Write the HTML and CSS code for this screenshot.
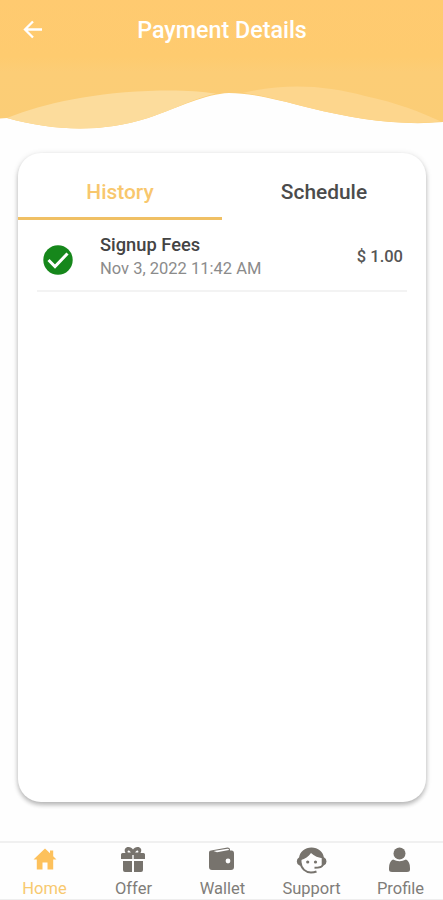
FILE: index.html
```
<!DOCTYPE html>
<html lang="en">
<head>
<meta charset="utf-8">
<title>Payment Details</title>
<link rel="stylesheet" href="styles.css">
</head>
<body>
<div class="app">
  <header class="header">
    <svg class="waves" viewBox="0 0 443 140" aria-hidden="true">
      <defs>
        <linearGradient id="sky" x1="0" y1="0" x2="0" y2="1">
          <stop offset="0" stop-color="#ffca70"/>
          <stop offset=".44" stop-color="#fecb6f"/>
          <stop offset=".56" stop-color="#fccd76"/>
          <stop offset="1" stop-color="#fbcd76"/>
        </linearGradient>
      </defs>
      <path fill="url(#sky)" d="M0 0H443V122C400 126 355 119 310 108C275 99 250 93 229 93C205 94 180 107 148 118C100 133 55 131 7 118L0 118.500Z"/>
      <path fill="#fcdc9c" d="M7 118C45 103 95 92 160 90.500C180 90 200 91 216 93.500C195 98 175 109 148 118C100 133 55 131 7 118Z"/>
      <path fill="#fdd68d" d="M242 93C285 83 325 85 365 96C398 103 420 112 441 121.500C400 126 355 119 310 108C282 101 258 94 242 93Z"/>
    </svg>
    <div class="bar">
      <svg class="back" viewBox="0 0 20 20"><path d="M19 9.500H2.500M10 1.500L2 9.500L10 17.500"/></svg>
      <h1 class="title">Payment Details</h1>
    </div>
  </header>
  <main class="card">
    <div class="tabs">
      <div class="tab active">History</div>
      <div class="tab">Schedule</div>
    </div>
    <div class="row">
      <svg class="check" viewBox="0 0 30 30"><circle cx="15" cy="15" r="14.700" fill="#16871b"/><path d="M5.500 15L12 21.500L24.500 8.500" fill="none" stroke="#fff" stroke-width="3"/></svg>
      <div class="info">
        <div class="name">Signup Fees</div>
        <div class="date">Nov 3, 2022 11:42 AM</div>
      </div>
      <div class="amount">$ 1.00</div>
    </div>
  </main>
  <nav class="nav">
    <div class="item current">
      <svg viewBox="0 0 32 30"><path d="M16 3.500L4.500 14.500H7.800V24.500H13.500V17.500H18.500V24.500H24.200V14.500H27.500L24.200 11.300V5.500H21V8.300Z"/></svg>
      <span class="label">Home</span>
    </div>
    <div class="item">
      <svg viewBox="0 0 32 30"><path d="M4.500 8H7.500C5.500 4.500 7.500 2 10.500 2C12.500 2 14 3 15 4.500C16 3 17.500 2 19.500 2C22.500 2 24.500 4.500 22.500 8H25.500Q27 8 27 9.500V14H3V9.500Q3 8 4.500 8ZM5 16H14V27H7Q5 27 5 25ZM16 16H25V25Q25 27 23 27H16Z"/><path class="cut" d="M9.800 7.500C9 5.500 11 4.500 12.800 7.500ZM17.200 7.500C19 4.500 21 5.500 20.200 7.500ZM14.300 10H15.700V14.500H14.300Z"/></svg>
      <span class="label">Offer</span>
    </div>
    <div class="item">
      <svg viewBox="0 0 32 30"><path d="M4 5.500L20.500 2.500Q23 2.500 23 4.500V5.500H24.500Q27 5.500 27 8.500V22Q27 25 24 25H5Q2 25 2 22V7.500Q2 5.500 4 5.500Z"/><path class="cut" d="M6.500 6L20.500 3.700Q22 3.700 22 5L10 7.200Z"/><circle class="cut" cx="21" cy="16" r="2.400"/></svg>
      <span class="label">Wallet</span>
    </div>
    <div class="item">
      <svg viewBox="0 0 32 30"><path d="M3 13.500C3.500 6.500 9 2.500 15.500 2.500C22 2.500 27.500 6.500 28 13.500C22.500 13 18 11 15 8C12.500 11.500 9 14 5 15Z"/><path class="line" d="M4.500 12.500V17C5 24 10 27.500 15 27.500Q18 27.500 20.500 26.500M26.700 12.500V20Q26 22.800 18.500 22.800"/><path d="M3 12.500H5V20.500H3.500Q.8 19.500 .8 16.500Q.8 13.500 3 12.500ZM26 12.500H28.200Q30.500 13.500 30.500 16.500Q30.500 19.500 27.800 20.500H26Z"/><circle cx="11.700" cy="17" r="1.600"/><circle cx="19.500" cy="17" r="1.600"/></svg>
      <span class="label">Support</span>
    </div>
    <div class="item">
      <svg viewBox="0 0 32 30"><circle cx="14.500" cy="8.500" r="6"/><path d="M8 14.500Q14.500 18 21 14.500Q25 16.500 25 23V24.500Q25 27 22 27H7Q4 27 4 24.500V23Q4 16.500 8 14.500Z"/></svg>
      <span class="label">Profile</span>
    </div>
  </nav>
</div>
</body>
</html>
```
FILE: styles.css
```
* { box-sizing: border-box; }
body {
  margin: 0;
  background: #fefefe;
  font-family: Roboto, "Liberation Sans", sans-serif;
}
.app {
  height: 900px;
  display: flex;
  flex-direction: column;
  overflow: hidden;
}
.header {
  display: grid;
  height: 153px;
  flex: none;
}
.waves, .bar { grid-area: 1 / 1; }
.waves { width: 443px; height: 140px; display: block; }
.bar {
  display: grid;
  grid-template-columns: 44px 1fr 43px;
  align-items: center;
  height: 60px;
  z-index: 1;
}
.back {
  width: 20px;
  height: 20px;
  margin-left: 23px;
  fill: none;
  stroke: #fff;
  stroke-width: 2.3;
}
.title {
  margin: 0;
  text-align: center;
  font-size: 23.3px;
  line-height: 30px;
  font-weight: 500;
  color: #fff;
}
.card {
  width: 408px;
  height: 649px;
  flex: none;
  margin-left: 18px;
  background: #fff;
  border-radius: 23px;
  box-shadow: 0 3px 4px rgba(0, 0, 0, .22), 0 1px 6px rgba(0, 0, 0, .12);
}
.tabs { display: flex; height: 67px; }
.tab {
  flex: 1;
  padding-top: 24px;
  text-align: center;
  font-size: 20.9px;
  line-height: 30px;
  font-weight: 500;
  color: #4b4b4b;
}
.active { color: #f8c76d; border-bottom: 3px solid #f0c064; }
.row {
  display: flex;
  height: 72px;
  margin: 0 19px;
  border-bottom: 2px solid #f3f3f3;
}
.check { width: 30px; height: 30px; margin: 25px 0 0 6px; }
.info { margin-left: 27px; flex: 1; white-space: nowrap; }
.name {
  margin-top: 13px;
  font-size: 18.3px;
  line-height: 24px;
  font-weight: 500;
  color: #444;
}
.date { font-size: 16.5px; line-height: 24px; color: #8b8b8b; }
.amount {
  margin: 25px 4px 0 0;
  font-size: 16.5px;
  line-height: 24px;
  font-weight: 500;
  color: #555;
}
.nav {
  display: flex;
  height: 59px;
  margin-top: auto;
  margin-right: -2px;
  flex: none;
  border-top: 2px solid #f0f0f0;
  border-bottom: 1px solid #eee;
}
.item {
  flex: 1;
  display: flex;
  flex-direction: column;
  align-items: center;
}
.item svg { flex: none; width: 32px; height: 30px; margin-top: 2px; fill: #77736d; }
.item .cut { fill: #fefefe; }
.item .line { fill: none; stroke: #77736d; stroke-width: 2; }
.item.current svg { fill: #fdc15c; }
.label { margin-top: 2px; font-size: 16.5px; line-height: 24px; color: #807d79; }
.current .label { color: #f8c96f; }
```
